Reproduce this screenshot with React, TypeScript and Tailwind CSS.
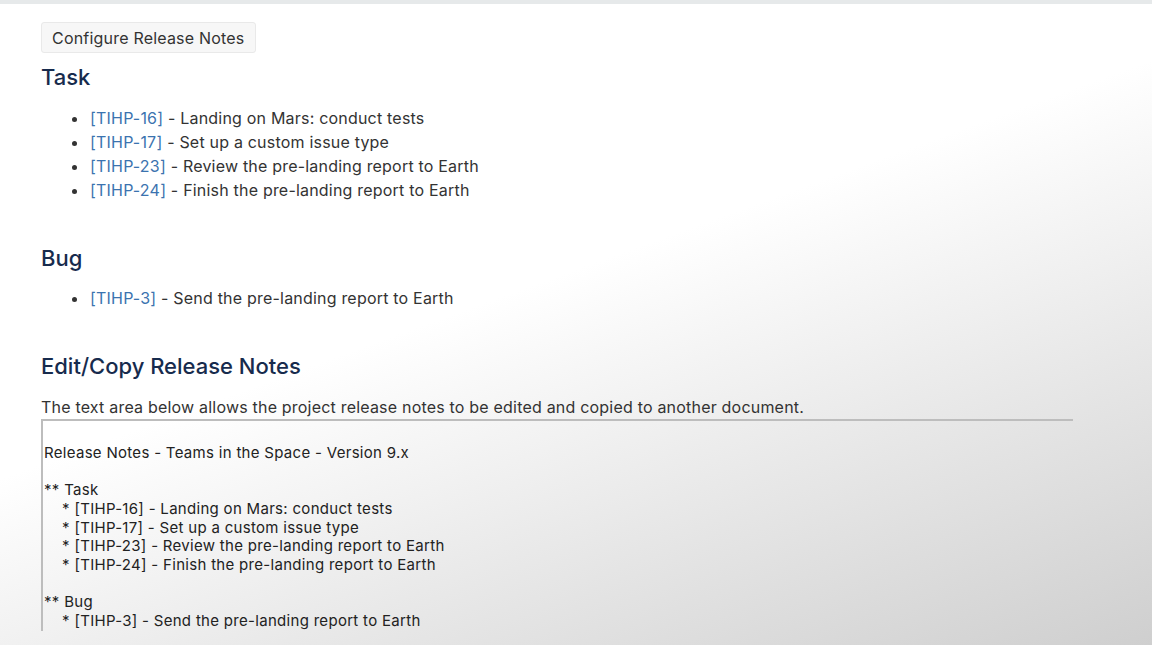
import React from "react";

const tasks = [
    { key: "TIHP-16", title: "Landing on Mars: conduct tests" },
    { key: "TIHP-17", title: "Set up a custom issue type" },
    { key: "TIHP-23", title: "Review the pre-landing report to Earth" },
    { key: "TIHP-24", title: "Finish the pre-landing report to Earth" },
];

const bugs = [{ key: "TIHP-3", title: "Send the pre-landing report to Earth" }];

function IssueList({ items }: { items: { key: string; title: string }[] }) {
    return (
        <ul className="list-disc pl-[48px] text-[16px] leading-[24px] tracking-[0.2px] text-[#333]">
            {items.map((i) => (
                <li key={i.key} className="pl-[1px]">
                    <a href="#" className="text-[#3b73af]">[{i.key}]</a> - {i.title}
                </li>
            ))}
        </ul>
    );
}

const notes = [
    "",
    "Release Notes - Teams in the Space - Version 9.x",
    "",
    "** Task",
    ...tasks.map((t) => `    * [${t.key}] - ${t.title}`),
    "",
    "** Bug",
    ...bugs.map((t) => `    * [${t.key}] - ${t.title}`),
].join("\n");

export default function App() {
    return (
        <div className="w-[1152px] h-[645px] overflow-hidden flex flex-col bg-linear-160 from-white from-45% to-[#cfcfcf] font-['Inter',sans-serif]">
            <div className="h-[4px] bg-[#e6e9ea] shrink-0" />
            <div className="flex flex-col pl-[41px] pt-[18px]">
                <div>
                    <button className="h-[31px] px-[10px] bg-[#f7f7f7] border border-[#e9e9e9] rounded-[3px] text-[16px] tracking-[0.2px] text-[#333]">
                        Configure Release Notes
                    </button>
                </div>
                <h2 className="text-[22px] leading-[30px] font-medium text-[#172b4d] mt-[9px]">Task</h2>
                <div className="mt-[14px]">
                    <IssueList items={tasks} />
                </div>
                <h2 className="text-[22px] leading-[30px] font-medium text-[#172b4d] mt-[41px]">Bug</h2>
                <div className="mt-[13px]">
                    <IssueList items={bugs} />
                </div>
                <h2 className="text-[22px] leading-[32px] font-medium text-[#172b4d] mt-[40px]">Edit/Copy Release Notes</h2>
                <p className="text-[16px] leading-[24px] tracking-[0.2px] text-[#333] mt-[13px]">
                    The text area below allows the project release notes to be edited and copied to another document.
                </p>
                <div className="w-[1032px] border-t-2 border-l-2 border-[#bdbdbd] pl-[1px] pt-[4px] text-[15px] leading-[18.7px] tracking-[0.3px] text-[#222] whitespace-pre">
                    {notes}
                </div>
            </div>
        </div>
    );
}
